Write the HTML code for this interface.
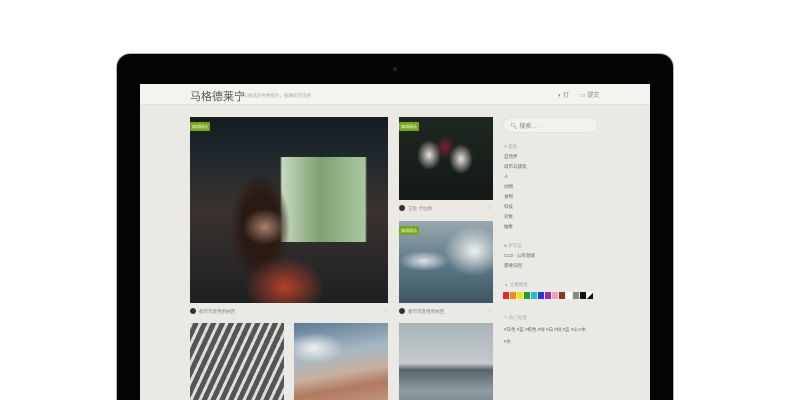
<!DOCTYPE html><html><head><meta charset="utf-8"><style>
*{margin:0;padding:0;box-sizing:border-box}
html,body{width:790px;height:400px;overflow:hidden}
body{background:#fff;position:relative;font-family:"Liberation Sans","Noto Sans CJK SC",sans-serif}
.frame{position:absolute;left:117px;top:54px;width:556px;height:346px;background:#050505;border-radius:13px 13px 0 0;box-shadow:0 0 0 1px #b9b3aa}
.screen{position:absolute;left:140px;top:84px;width:510px;height:316px;background:#ebe9e3;overflow:hidden}
.hdr{position:absolute;left:0;top:0;width:510px;height:21px;background:#f4f3ef;border-bottom:1px solid #e2e0da}
.a{position:absolute}
.t{position:absolute;font-size:4.5px;color:#666;white-space:nowrap}
.tag{position:absolute;background:#79a51c;color:#e8f2d0;font-size:4px;padding:1px 2px;height:9px;line-height:7px;border-radius:1px}
.sw{display:inline-block;width:6px;height:7px;margin-right:1px;vertical-align:top}
.av{position:absolute;width:6px;height:6px;border-radius:50%;background:#333}
</style></head><body>
<div class="frame"></div>
<div class="a" style="left:393px;top:67px;width:4px;height:4px;border-radius:50%;background:#222"></div>
<div class="screen">
<div class="hdr"></div>
<div class="t" style="left:50px;top:4px;font-size:11px;color:#555">马格德莱宁</div>
<div class="t" style="left:99px;top:9px;font-size:4.5px;color:#aaa">精心挑选的免费照片，鼓舞您的灵感</div>
<div class="t" style="left:418px;top:6px;font-size:6px;color:#888">◐ 灯</div>
<div class="t" style="left:440px;top:6px;font-size:6px;color:#888">▭ 提交</div>
<div class="a" style="left:50px;top:33px;width:198px;height:186px;background:
radial-gradient(ellipse 40px 30px at 95px 170px,#b4402a,transparent),
radial-gradient(ellipse 22px 18px at 75px 110px,#a8826a,transparent),
radial-gradient(ellipse 30px 55px at 70px 110px,#2a1a14 60%,transparent),
linear-gradient(90deg,transparent 90px,#c8d8c0 92px,#7fa070 130px,#a9c7a0 175px,transparent 177px) 0 40px/100% 85px no-repeat,
linear-gradient(180deg,#141c20 0,#1e282c 20%,#3a3230 50%,#1e2022 100%)"></div>
<div class="tag" style="left:50px;top:38px">编辑精选</div>
<div class="av" style="left:50px;top:224px"></div>
<div class="t" style="left:59px;top:225px;color:#888">都市市客用用纳西</div>
<div class="t" style="left:243px;top:224px;color:#aaa">♡</div>
<div class="a" style="left:259px;top:33px;width:94px;height:83px;background:
radial-gradient(ellipse 12px 15px at 30px 38px,#e8e0dc,transparent),
radial-gradient(ellipse 12px 15px at 62px 42px,#ece4e0,transparent),
radial-gradient(ellipse 10px 12px at 46px 30px,#7a2030,transparent),
linear-gradient(180deg,#1e2822,#141816)"></div>
<div class="tag" style="left:259px;top:38px">编辑精选</div>
<div class="av" style="left:259px;top:121px"></div>
<div class="t" style="left:268px;top:122px;color:#888">艾伦·卡拉斯</div>
<div class="t" style="left:347px;top:121px;color:#aaa">♡</div>
<div class="a" style="left:259px;top:137px;width:94px;height:82px;background:
radial-gradient(ellipse 30px 25px at 75px 30px,#eef0f0,transparent),
radial-gradient(ellipse 25px 10px at 25px 40px,#e0e4e6,transparent),
linear-gradient(180deg,#9aa8b0,#5e7a88 50%,#3e5664)"></div>
<div class="tag" style="left:259px;top:142px">编辑精选</div>
<div class="av" style="left:259px;top:224px"></div>
<div class="t" style="left:268px;top:225px;color:#888">都市市客用用纳西</div>
<div class="t" style="left:347px;top:224px;color:#aaa">♡</div>
<div class="a" style="left:50px;top:239px;width:94px;height:90px;background:repeating-linear-gradient(115deg,#ddd 0 3px,#555 3px 8px)"></div>
<div class="a" style="left:154px;top:239px;width:94px;height:90px;background:
radial-gradient(ellipse 30px 15px at 20px 25px,#f0f2f2,transparent),
linear-gradient(170deg,#5c7a92 0,#a6b8c4 35%,#c8b0a0 55%,#b07a60 70%,#c9a490)"></div>
<div class="a" style="left:259px;top:239px;width:94px;height:90px;background:linear-gradient(180deg,#a8b2b8,#c4cacc 45%,#56646c 52%,#8e9ca4 75%,#6a7880)"></div>
<div class="a" style="left:363px;top:33px;width:95px;height:16px;border-radius:8px;background:#f2f1ed;border:1px solid #e4e2dc"></div>
<div class="t" style="left:370px;top:37px;font-size:6px;color:#888">🔍︎ 搜索. . .</div>
<div class="t" style="left:364px;top:60px;color:#aaa">● 类别</div>
<div class="t" style="left:364px;top:70px">自然界</div>
<div class="t" style="left:364px;top:80px">城市与建筑</div>
<div class="t" style="left:364px;top:90px">人</div>
<div class="t" style="left:364px;top:100px">动物</div>
<div class="t" style="left:364px;top:110px">食物</div>
<div class="t" style="left:364px;top:120px">科技</div>
<div class="t" style="left:364px;top:130px">对象</div>
<div class="t" style="left:364px;top:140px">抽象</div>
<div class="t" style="left:364px;top:159px;color:#aaa">■ 许可证</div>
<div class="t" style="left:364px;top:169px">CC0 - 公有领域</div>
<div class="t" style="left:364px;top:179px">需要归因</div>
<div class="t" style="left:364px;top:198px;color:#aaa">▲ 主要颜色</div>
<div class="a" style="left:363px;top:208px;width:100px;height:8px;font-size:0;white-space:nowrap">
<span class="sw" style="background:#e02a2a"></span><span class="sw" style="background:#f08a1c"></span><span class="sw" style="background:#f2e020"></span><span class="sw" style="background:#2a9a2a"></span><span class="sw" style="background:#2ab8d8"></span><span class="sw" style="background:#2a3ac8"></span><span class="sw" style="background:#9a2ab8"></span><span class="sw" style="background:#f0a0b8"></span><span class="sw" style="background:#8a3a20"></span><span class="sw" style="background:#fff"></span><span class="sw" style="background:#888"></span><span class="sw" style="background:#111"></span><span class="sw" style="background:linear-gradient(135deg,#fff 50%,#111 50%)"></span></div>
<div class="t" style="left:364px;top:231px;color:#aaa">✎ 热门标签</div>
<div class="t" style="left:364px;top:243px">#灰色 #蓝 #棕色 #绿 #白 #树 #蓝 #山 #木</div>
<div class="t" style="left:364px;top:255px">#水</div>
</div>
</body></html>
